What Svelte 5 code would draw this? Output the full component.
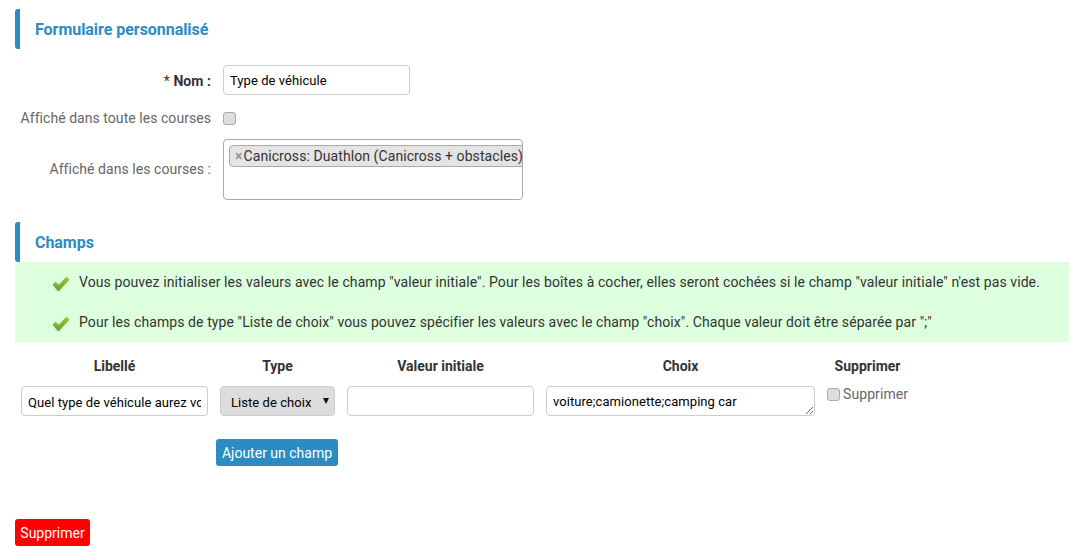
<script>
  let nom = $state("Type de véhicule");
  const courses = ["Canicross: Duathlon (Canicross + obstacles)"];
  const infos = [
    'Vous pouvez initialiser les valeurs avec le champ "valeur initiale". Pour les boîtes à cocher, elles seront cochées si le champ "valeur initiale" n\'est pas vide.',
    'Pour les champs de type "Liste de choix" vous pouvez spécifier les valeurs avec le champ "choix". Chaque valeur doit être séparée par ";"',
  ];
  const columns = ["Libellé", "Type", "Valeur initiale", "Choix", "Supprimer"];
</script>

<main>
  <h2>Formulaire personnalisé</h2>

  <form class="fields">
    <label class="name" for="nom"><span class="star">*</span> Nom :</label>
    <input id="nom" class="text name-input" type="text" bind:value={nom} />

    <label class="all" for="toutes">Affiché dans toute les courses</label>
    <div class="check-cell"><input id="toutes" type="checkbox" /></div>

    <span class="label-text">Affiché dans les courses :</span>
    <div class="multi">
      {#each courses as course}
        <span class="tag"><span class="remove">×</span>{course}</span>
      {/each}
    </div>
  </form>

  <h2 class="second">Champs</h2>

  <ul class="infos">
    {#each infos as info}
      <li>
        <svg width="18" height="16" viewBox="0 0 18 16">
          <defs>
            <linearGradient id="tick" x1="0" y1="0" x2="0" y2="1">
              <stop offset="0" stop-color="#94c83d" />
              <stop offset="1" stop-color="#6aa32c" />
            </linearGradient>
          </defs>
          <path d="M1 8.6 L3.6 6.2 L6.8 9.2 L14.4 1.2 L17 3.6 L7 14.6 L5.8 14.6 Z" fill="url(#tick)" stroke="url(#tick)" stroke-width="1" stroke-linejoin="round" />
        </svg>
        <span>{info}</span>
      </li>
    {/each}
  </ul>

  <table>
    <thead>
      <tr>
        {#each columns as column}
          <th>{column}</th>
        {/each}
      </tr>
    </thead>
    <tbody>
      <tr>
        <td><input class="text cell-input" type="text" value="Quel type de véhicule aurez vous ?" /></td>
        <td>
          <div class="select-wrap">
            <select>
              <option>Liste de choix</option>
            </select>
          </div>
        </td>
        <td><input class="text cell-input" type="text" /></td>
        <td><textarea class="text choices">voiture;camionette;camping car</textarea></td>
        <td>
          <label class="delete"><input type="checkbox" /> Supprimer</label>
        </td>
      </tr>
      <tr>
        <td></td>
        <td colspan="4" class="add-cell"><button type="button" class="btn add">Ajouter un champ</button></td>
      </tr>
    </tbody>
  </table>

  <button type="button" class="btn danger">Supprimer</button>
</main>

<style>
  :global(body) {
    font-family: Roboto, sans-serif;
    font-size: 14px;
    letter-spacing: 0.08px;
    color: #333;
    background: #fff;
  }

  main {
    padding: 9px 0 13px 15px;
  }

  h2 {
    margin: 0;
    height: 40px;
    box-sizing: border-box;
    border-left: 5px solid #2b8cc4;
    border-radius: 3px 0 0 3px;
    padding-left: 15px;
    font-size: 16px;
    font-weight: 700;
    letter-spacing: -0.04px;
    line-height: 41px;
    color: #2b8cc4;
  }

  .second {
    margin-top: 22px;
  }

  .fields {
    display: grid;
    grid-template-columns: 196px 300px;
    column-gap: 12px;
    row-gap: 14px;
    align-items: center;
    margin-top: 16px;
  }

  .fields label,
  .label-text {
    text-align: right;
    color: #666;
    letter-spacing: 0.05px;
  }

  .fields .name {
    font-weight: 700;
    color: #333;
  }

  .fields .all {
    line-height: 17px;
    margin-bottom: -2px;
  }

  .star {
    font-weight: 400;
  }

  .text {
    box-sizing: border-box;
    width: 100%;
    height: 30px;
    padding: 0 6px;
    border: 1px solid #ccc;
    border-radius: 4px;
    font-family: Roboto, sans-serif;
    font-size: 13px;
    letter-spacing: 0.06px;
    color: #000;
    background: #fff;
  }

  .cell-input {
    padding-top: 2px;
  }

  .name-input {
    width: 187px;
    margin-bottom: 1px;
  }

  .check-cell {
    display: flex;
    height: 13px;
    margin-top: 1px;
  }

  .check-cell input,
  .delete input {
    appearance: none;
    box-sizing: border-box;
    margin: 0;
    width: 13px;
    height: 13px;
    border: 1px solid #aaa;
    border-radius: 3px;
    background: #ddd;
  }

  .label-text {
    padding-bottom: 2px;
  }

  .multi {
    box-sizing: border-box;
    height: 61px;
    padding: 5px;
    border: 1px solid #aaa;
    border-radius: 4px;
    overflow: hidden;
    white-space: nowrap;
  }

  .tag {
    display: inline-block;
    box-sizing: border-box;
    height: 22px;
    padding: 0 5px;
    border: 1px solid #aaa;
    border-radius: 4px;
    background: #e4e4e4;
    line-height: 20px;
  }

  .remove {
    margin-right: 1px;
    font-weight: 700;
    color: #999;
  }

  .infos {
    list-style: none;
    margin: 0;
    padding: 0;
    height: 80px;
    background: #dfd;
  }

  .infos li {
    display: flex;
    align-items: center;
    gap: 9px;
    height: 40px;
    padding-left: 37px;
    letter-spacing: 0.09px;
    color: #333;
  }

  .infos svg {
    margin-top: 3px;
    flex: none;
  }

  table {
    border-collapse: collapse;
    margin-top: 12px;
  }

  th {
    height: 20px;
    padding: 2px 6px 10px;
    font-size: 14px;
    letter-spacing: 0;
    text-align: center;
  }

  td {
    padding: 0 6px;
    vertical-align: top;
  }

  td:nth-child(1),
  td:nth-child(3) {
    width: 187px;
  }

  td:nth-child(2) {
    width: 115px;
  }

  td:nth-child(4) {
    width: 269px;
  }

  .select-wrap {
    position: relative;
    width: 115px;
  }

  .select-wrap::after {
    content: "";
    position: absolute;
    top: 12px;
    right: 6px;
    border-left: 3.5px solid transparent;
    border-right: 3.5px solid transparent;
    border-top: 6px solid #111;
    pointer-events: none;
  }

  select {
    appearance: none;
    display: block;
    box-sizing: border-box;
    width: 115px;
    height: 30px;
    padding: 2px 0 0 10px;
    border: 1px solid #ccc;
    border-radius: 4px;
    background: #ddd;
    font-family: Roboto, sans-serif;
    font-size: 13px;
    letter-spacing: 0.06px;
    color: #000;
  }

  .choices {
    display: block;
    padding-top: 7px;
    resize: vertical;
  }

  .delete {
    display: flex;
    align-items: center;
    gap: 3px;
    margin-top: 0;
    color: #666;
    height: 16px;
  }

  .add-cell {
    padding: 23px 0 0 2px;
  }

  .btn {
    border: 0;
    border-radius: 3px;
    height: 27px;
    font-family: Roboto, sans-serif;
    font-size: 14px;
    color: #fff;
  }

  .add {
    width: 122px;
    padding: 0;
    background: #2b8cc4;
  }

  .danger {
    display: block;
    width: 75px;
    padding: 0;
    margin-top: 53px;
    background: #f00;
  }
</style>
